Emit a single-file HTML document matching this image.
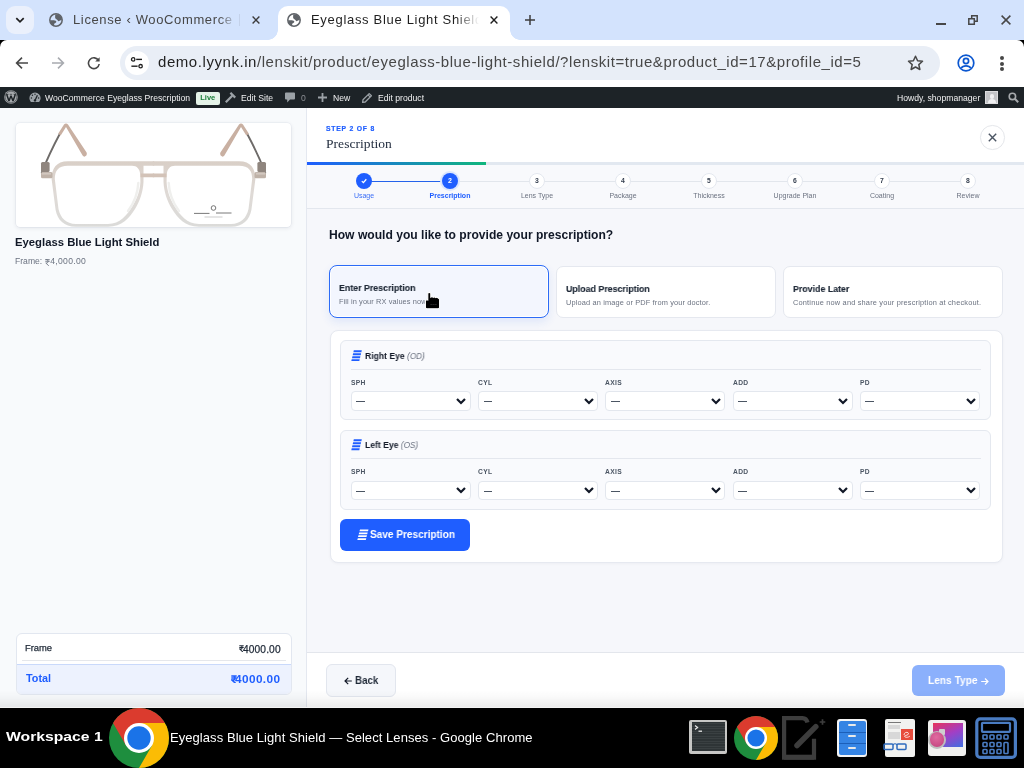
<!DOCTYPE html>
<html><head><meta charset="utf-8">
<style>
*{box-sizing:border-box;margin:0;padding:0}
html,body{width:1024px;height:768px;overflow:hidden;background:#000}
body{position:relative;font-family:"Liberation Sans",sans-serif}
.a.nw,.tx{will-change:transform}
.a{position:absolute}
.nw{white-space:nowrap}
/* chrome */
#tabbar{left:0;top:0;width:1024px;height:40px;background:#d3e3fd}
#toolbar{left:0;top:40px;width:1024px;height:47px;background:#fff;border-radius:7px 7px 0 0}
#adminbar{left:0;top:87px;width:1024px;height:21px;background:#1d2327;color:#f0f0f1;font-size:8.6px}
#page{left:0;top:108px;width:1024px;height:600px;background:#f5f7fa;overflow:hidden}
#taskbar{left:0;top:708px;width:1024px;height:60px;background:#000}
</style></head><body>

<!-- TAB BAR -->
<div id="tabbar" class="a">
  <div class="a" style="left:6px;top:6px;width:28px;height:28px;border-radius:9px;background:#eaf0fc"></div>
  <svg class="a" style="left:14px;top:14px" width="12" height="12" viewBox="0 0 12 12"><path d="M2.3 4.2 L6 7.9 L9.7 4.2" fill="none" stroke="#1f1f1f" stroke-width="1.7"/></svg>
  <!-- tab1 -->
  <svg class="a" style="left:49px;top:13px" width="14" height="14" viewBox="0 0 14 14"><circle cx="7" cy="7" r="6.2" fill="none" stroke="#5f6368" stroke-width="1.5"/><path d="M6.3 1.2 A5.9 5.9 0 0 1 12.9 7.2 L11.6 7.3 C10.8 7.4 10.4 8.2 9.6 8.2 C8.8 8.2 8.5 6.7 7.4 6.3 C6.4 5.9 6 5 6.1 3.8 Z" fill="#5f6368"/><path d="M1.1 7.3 L4.8 7.3 C6.2 7.3 7.6 8.1 7.3 9.1 C7 10 5.8 10 5.3 10.8 L4.9 12.7 A5.9 5.9 0 0 1 1.1 7.3 Z" fill="#5f6368"/></svg>
  <div class="a nw" style="left:72.5px;top:12px;width:165px;overflow:hidden;font-size:13px;color:#474747;letter-spacing:0.63px;-webkit-mask-image:linear-gradient(90deg,#000 88%,transparent 100%)">License ‹ WooCommerce Eyeglass</div>
  <div class="a" style="left:238.5px;top:14px;width:1px;height:12px;background:#c4d2ea"></div>
  <svg class="a" style="left:252px;top:16px" width="8" height="8" viewBox="0 0 8 8"><path d="M0.6 0.6 L7.4 7.4 M7.4 0.6 L0.6 7.4" stroke="#3c3c3c" stroke-width="1.4"/></svg>
  <!-- active tab -->
  <div class="a" style="left:278px;top:6px;width:232px;height:40px;background:#fff;border-radius:10px 10px 0 0"></div>
  <div class="a" style="left:268px;top:30px;width:10px;height:10px;background:radial-gradient(circle at 0 0,transparent 9.5px,#fff 10px)"></div>
  <div class="a" style="left:510px;top:30px;width:10px;height:10px;background:radial-gradient(circle at 100% 0,transparent 9.5px,#fff 10px)"></div>
  <svg class="a" style="left:287px;top:13px" width="14" height="14" viewBox="0 0 14 14"><circle cx="7" cy="7" r="6.2" fill="none" stroke="#5f6368" stroke-width="1.5"/><path d="M6.3 1.2 A5.9 5.9 0 0 1 12.9 7.2 L11.6 7.3 C10.8 7.4 10.4 8.2 9.6 8.2 C8.8 8.2 8.5 6.7 7.4 6.3 C6.4 5.9 6 5 6.1 3.8 Z" fill="#5f6368"/><path d="M1.1 7.3 L4.8 7.3 C6.2 7.3 7.6 8.1 7.3 9.1 C7 10 5.8 10 5.3 10.8 L4.9 12.7 A5.9 5.9 0 0 1 1.1 7.3 Z" fill="#5f6368"/></svg>
  <div class="a nw" style="left:311px;top:12px;width:168px;overflow:hidden;font-size:13px;color:#1f1f1f;letter-spacing:0.69px;-webkit-mask-image:linear-gradient(90deg,#000 86%,transparent 100%)">Eyeglass Blue Light Shield — Select</div>
  <svg class="a" style="left:490px;top:16px" width="8" height="8" viewBox="0 0 8 8"><path d="M0.6 0.6 L7.4 7.4 M7.4 0.6 L0.6 7.4" stroke="#1f1f1f" stroke-width="1.4"/></svg>
  <svg class="a" style="left:525px;top:15px" width="10" height="10" viewBox="0 0 10 10"><path d="M5 0 V10 M0 5 H10" stroke="#3c3c3c" stroke-width="1.5"/></svg>
  <!-- window controls -->
  <div class="a" style="left:936px;top:22.5px;width:10px;height:2px;background:#474747"></div>
  <svg class="a" style="left:968px;top:15px" width="10" height="10" viewBox="0 0 10 10"><path d="M3.7 3.7 V0.8 H9.2 V6.3 H6.3" fill="none" stroke="#474747" stroke-width="1.5"/><path d="M0.8 3.7 H6.3 V9.2 H0.8Z" fill="none" stroke="#474747" stroke-width="1.5"/></svg>
  <svg class="a" style="left:1001px;top:15px" width="10" height="10" viewBox="0 0 10 10"><path d="M0.6 0.6 L9.4 9.4 M9.4 0.6 L0.6 9.4" stroke="#474747" stroke-width="1.5"/></svg>
</div>

<!-- TOOLBAR -->
<div id="toolbar" class="a">
  <svg class="a" style="left:15px;top:16px" width="14" height="14" viewBox="0 0 14 14"><path d="M13 7 H2 M7 1.6 L1.6 7 L7 12.4" fill="none" stroke="#474747" stroke-width="1.6"/></svg>
  <svg class="a" style="left:51px;top:16px" width="14" height="14" viewBox="0 0 14 14"><path d="M1 7 H12 M7 1.6 L12.4 7 L7 12.4" fill="none" stroke="#a8abb0" stroke-width="1.6"/></svg>
  <svg class="a" style="left:87px;top:16px" width="14" height="14" viewBox="0 0 14 14"><path d="M11.6 4.6 A5.4 5.4 0 1 0 12.2 8" fill="none" stroke="#474747" stroke-width="1.6"/><path d="M12.6 1.2 V5.6 H8.2Z" fill="#474747"/></svg>
  <div class="a" style="left:120px;top:6px;width:820px;height:34px;border-radius:17px;background:#e9eef6"></div>
  <div class="a" style="left:125px;top:11px;width:24px;height:24px;border-radius:12px;background:#fff"></div>
  <svg class="a" style="left:130px;top:16px" width="14" height="14" viewBox="0 0 14 14"><circle cx="3.2" cy="3.4" r="1.7" fill="none" stroke="#1f1f1f" stroke-width="1.3"/><path d="M6.2 3.4 H12" stroke="#1f1f1f" stroke-width="1.4"/><circle cx="10.6" cy="10.2" r="1.7" fill="none" stroke="#1f1f1f" stroke-width="1.3"/><path d="M1.4 10.2 H7.6" stroke="#1f1f1f" stroke-width="1.4"/></svg>
  <div class="a nw" style="left:158px;top:13px;font-size:15px;letter-spacing:0.56px;color:#474747"><span style="color:#1f1f1f">demo.lyynk.in</span>/lenskit/product/eyeglass-blue-light-shield/?lenskit=true&amp;product_id=17&amp;profile_id=5</div>
  <svg class="a" style="left:907px;top:15px" width="17" height="16" viewBox="0 0 17 16"><path d="M8.5 1.3 L10.6 5.8 L15.5 6.3 L11.8 9.6 L12.9 14.5 L8.5 12 L4.1 14.5 L5.2 9.6 L1.5 6.3 L6.4 5.8Z" fill="none" stroke="#474747" stroke-width="1.5" stroke-linejoin="round"/></svg>
  <svg class="a" style="left:957px;top:14px" width="18" height="18" viewBox="0 0 18 18"><circle cx="9" cy="9" r="7.8" fill="none" stroke="#0b57d0" stroke-width="1.7"/><circle cx="9" cy="7" r="2.6" fill="none" stroke="#0b57d0" stroke-width="1.7"/><path d="M4.2 14.2 C6 11 12 11 13.8 14.2" fill="none" stroke="#0b57d0" stroke-width="1.7"/></svg>
  <div class="a" style="left:1000px;top:16px;width:4px;height:4px;border-radius:2px;background:#474747"></div>
  <div class="a" style="left:1000px;top:21.5px;width:4px;height:4px;border-radius:2px;background:#474747"></div>
  <div class="a" style="left:1000px;top:27px;width:4px;height:4px;border-radius:2px;background:#474747"></div>
</div>

<!-- ADMIN BAR -->
<div id="adminbar" class="a">
  <svg class="a" style="left:4.2px;top:3.3px" width="14" height="14" viewBox="0 0 20 20"><circle cx="10" cy="10" r="9.7" fill="#a7aaad"/><circle cx="10" cy="10" r="8.4" fill="none" stroke="#1d2327" stroke-width="0.7"/><path d="M3.8 6.2 L7.1 15.6 L10 8.2 L12.9 15.6 L16.2 6.2" fill="none" stroke="#1d2327" stroke-width="2.1" stroke-linejoin="bevel"/><path d="M2.6 6.2 H6.4 M8.2 6.2 H11.6 M13.6 6.2 H17" stroke="#1d2327" stroke-width="0.9"/></svg>
  <svg class="a" style="left:29px;top:4.5px" width="12" height="11" viewBox="0 0 12 11"><path d="M6 0.5 A5.6 5.6 0 0 0 0.4 6.1 C0.4 7.6 1 8.9 1.9 9.9 H10.1 C11 8.9 11.6 7.6 11.6 6.1 A5.6 5.6 0 0 0 6 0.5Z" fill="#9ca2a7"/><path d="M6 8.6 L8.4 3.2" stroke="#1d2327" stroke-width="1.3"/><circle cx="6" cy="8.4" r="1.2" fill="#1d2327"/><circle cx="2.4" cy="6" r="0.7" fill="#1d2327"/><circle cx="3.4" cy="3.2" r="0.7" fill="#1d2327"/><circle cx="6" cy="2.2" r="0.7" fill="#1d2327"/><circle cx="9.6" cy="6" r="0.7" fill="#1d2327"/></svg>
  <div class="a nw" style="left:45px;top:5.5px;font-size:8.65px;color:#f0f0f1">WooCommerce Eyeglass Prescription</div>
  <div class="a nw" style="left:196px;top:4.5px;width:23.5px;height:12.5px;background:#e5f3e8;border-radius:2px;color:#1a7f37;font-size:7.5px;font-weight:bold;text-align:center;line-height:12px">Live</div>
  <svg class="a" style="left:224px;top:4px" width="13" height="13" viewBox="0 0 13 13"><path d="M7.2 1 L12 5.8 L10.4 7.4 L8.8 5.8 L2.6 12 L1 10.4 L7.2 4.2 L5.6 2.6Z" fill="#9ca2a7"/></svg>
  <div class="a nw" style="left:241px;top:5.5px;font-size:8.65px;color:#f0f0f1">Edit Site</div>
  <svg class="a" style="left:285px;top:5px" width="10" height="11" viewBox="0 0 10 11"><path d="M1 0.5 H9 A1 1 0 0 1 10 1.5 V6.5 A1 1 0 0 1 9 7.5 H5 L2.2 10.5 V7.5 H1 A1 1 0 0 1 0 6.5 V1.5 A1 1 0 0 1 1 0.5Z" fill="#9ca2a7"/></svg>
  <div class="a nw" style="left:300.5px;top:5.5px;font-size:8.65px;color:#8c8f94">0</div>
  <svg class="a" style="left:317.5px;top:6px" width="9" height="9" viewBox="0 0 9 9"><path d="M4.5 0 V9 M0 4.5 H9" stroke="#9ca2a7" stroke-width="1.8"/></svg>
  <div class="a nw" style="left:332.5px;top:5.5px;font-size:8.65px;color:#f0f0f1">New</div>
  <svg class="a" style="left:362px;top:5.5px" width="10" height="10" viewBox="0 0 10 10"><path d="M7.2 0.6 L9.4 2.8 L3.2 9 L0.6 9.4 L1 6.8Z" fill="none" stroke="#9ca2a7" stroke-width="1.3" stroke-linejoin="round"/><path d="M6 1.8 L8.2 4" stroke="#9ca2a7" stroke-width="1.1"/></svg>
  <div class="a nw" style="left:377.5px;top:5.5px;font-size:8.65px;color:#f0f0f1">Edit product</div>
  <div class="a nw" style="left:897px;top:5.5px;font-size:8.65px;color:#f0f0f1">Howdy, shopmanager</div>
  <div class="a" style="left:985px;top:3.5px;width:13px;height:13px;background:#c3c4c7;border:1px solid #dcdcde"><div class="a" style="left:3.5px;top:2px;width:4.5px;height:5px;border-radius:3px;background:#f0f0f1"></div><div class="a" style="left:1.5px;top:7px;width:8px;height:4px;border-radius:4px 4px 0 0;background:#f0f0f1"></div></div>
  <svg class="a" style="left:1008px;top:4.5px" width="11" height="11" viewBox="0 0 11 11"><circle cx="4.4" cy="4.4" r="3.2" fill="none" stroke="#a7aaad" stroke-width="1.6"/><path d="M6.8 6.8 L10.2 10.2" stroke="#a7aaad" stroke-width="2"/></svg>
</div>

<!-- PAGE -->
<div id="page" class="a">
  <!-- LEFT PANEL -->
  <div class="a" style="left:0;top:0;width:306px;height:600px;background:#f8fafc"></div>
  <div class="a" style="left:306px;top:0;width:1px;height:600px;background:#e4e8f0"></div>
  <div class="a" style="left:16px;top:14.5px;width:275px;height:104px;background:#fff;border-radius:4px;box-shadow:0 1px 4px rgba(30,40,70,.10),0 0 0 0.5px #e8ecf2;overflow:hidden"><svg class="a" style="left:0;top:0" width="275" height="104" viewBox="0 0 275 104">
  <defs>
    <linearGradient id="fr" x1="0" y1="38" x2="0" y2="104" gradientUnits="userSpaceOnUse"><stop offset="0" stop-color="#d9cfc7"/><stop offset="0.5" stop-color="#dfdad6"/><stop offset="1" stop-color="#dbdbd9"/></linearGradient>
    <g id="halfg">
      <path d="M44 10.5 Q33 31 25.6 50" fill="none" stroke="#6e6b69" stroke-width="1.9"/>
      <path d="M42.1 10.8 L48 1.4 Q50 -0.6 52 1.4 L70.6 29.6 Q71.6 32.8 68.8 33.6 Q67.4 33.8 66.6 32.5 L50 4 L44.7 12.4 Z" fill="#c9b0a2"/>
      
      <path fill="url(#fr)" fill-rule="evenodd" d="M52 38.3 L138.2 38.3 L138.2 42.7 L127.5 42.7 L127.5 59 C127 69 124 78 119 86 C113.5 95 106 103.7 92 103.7 L60 103.7 C48 103.7 41.5 97 39.6 87 L35.6 56 C35.6 46 40 38.3 52 38.3 Z
        M52 42.7 L116 42.7 C121 42.7 124 46 124.3 52 L124.4 59 C124 68 121 76 116 84 C111 92 104 100.9 92 100.9 L60 100.9 C50 100.9 44.5 95 42.5 86 L38.8 56 C38.8 48 42 42.7 52 42.7 Z"/>
      <path d="M124.5 50.4 H138.2 V54.2 H124.5Z" fill="#d3c3b8"/>
      <path d="M122.3 60 C121.8 70 118 80 112 88" fill="none" stroke="#efefed" stroke-width="2.4" stroke-linecap="round"/>
      <rect x="25" y="39" width="8.6" height="10" rx="1.5" fill="#8f857e"/>
      <rect x="25" y="49" width="11.5" height="6.3" rx="1.5" fill="#bfb2a8"/>
      <rect x="26" y="49.8" width="9" height="1.8" fill="#d2c8c0"/>
    </g>
  </defs>
  <use href="#halfg"/>
  <use href="#halfg" transform="translate(275 0) scale(-1 1)"/>
  <circle cx="197.5" cy="85" r="2.3" fill="none" stroke="#555" stroke-width="0.8"/>
  <path d="M178 90.4 H193.5 M200 90 H215.5" stroke="#6a6a6a" stroke-width="0.9"/>
  <path d="M188.5 94 H206.5" stroke="#aaa" stroke-width="0.6"/>
</svg></div>
  <div class="a nw" style="left:15px;top:127.7px;font-size:11.3px;font-weight:bold;color:#111827">Eyeglass Blue Light Shield</div>
  <div class="a nw" style="left:15px;top:148.3px;font-size:8.6px;color:#6b7280">Frame: <span style="display:inline-block;width:5.6px"></span><span style="letter-spacing:0.3px">4,000.00</span></div><svg class="a" style="left:45.3px;top:150.6px" width="5" height="7" viewBox="0 0 5 7"><path d="M0.3 0.6 H4.7 M0.3 2.3 H4.7 M0.6 0.6 H1.8 C3.6 0.6 3.6 4 1.8 4 H0.8 L3.8 6.8" fill="none" stroke="#6b7280" stroke-width="0.85"/></svg>
  <!-- summary -->
  <div class="a" style="left:15.5px;top:525px;width:276px;height:61.7px;border-radius:6px;background:#fff;border:1px solid #e2e7f0;overflow:hidden">
    <div class="a nw" style="left:8.5px;top:7.8px;font-size:9.4px;color:#1f2937;-webkit-text-stroke:0.25px #1f2937">Frame</div>
    <div class="a nw" style="right:9.6px;top:10.2px;font-size:10.2px;letter-spacing:0.12px;color:#1f2937;-webkit-text-stroke:0.25px #1f2937">4000.00</div>
    <svg class="a" style="left:222.8px;top:10.8px" width="5" height="7" viewBox="0 0 5 7"><path d="M0.3 0.7 H4.7 M0.3 2.4 H4.7 M0.6 0.7 H1.8 C3.6 0.7 3.6 4.1 1.8 4.1 H0.8 L3.8 6.9" fill="none" stroke="#1f2937" stroke-width="1.05"/></svg>
    <div class="a" style="left:5px;top:25.5px;width:264px;height:1px;background:#e5e7eb"></div>
    <div class="a" style="left:0;top:29.5px;width:276px;height:32px;background:#edf2fe;border-top:1px solid #c9d9fb"></div>
    <div class="a nw" style="left:9px;top:38.3px;font-size:10.8px;font-weight:bold;color:#1f5eff">Total</div>
    <div class="a nw" style="right:9.6px;top:37.9px;font-size:11.8px;letter-spacing:0.4px;font-weight:bold;color:#1f5eff">4000.00</div>
    <svg class="a" style="left:214.5px;top:40.5px" width="6" height="8.5" viewBox="0 0 6 8.5"><path d="M0.3 0.9 H5.7 M0.3 2.9 H5.7 M0.7 0.9 H2.2 C4.4 0.9 4.4 5 2.2 5 H0.9 L4.6 8.4" fill="none" stroke="#1f5eff" stroke-width="1.5"/></svg>
  </div>
  <!-- frame price rupee fix -->

  <!-- RIGHT PANEL -->
  <div class="a" style="left:307px;top:0;width:717px;height:54px;background:#fff"></div>
  <div class="a nw" style="left:326px;top:16.5px;font-size:6.8px;font-weight:bold;color:#1f5eff;letter-spacing:0.8px;-webkit-text-stroke:0.2px #1f5eff">STEP 2 OF 8</div>
  <div class="a nw" style="left:326.3px;top:28px;font-family:'Liberation Serif',serif;font-size:13.5px;letter-spacing:0.05px;color:#1e293b">Prescription</div>
  <div class="a" style="left:980px;top:17px;width:24.5px;height:24.5px;border-radius:50%;border:1px solid #e5e7eb;background:#fff"></div>
  <svg class="a" style="left:988px;top:25px" width="9" height="9" viewBox="0 0 9 9"><path d="M0.8 0.8 L8.2 8.2 M8.2 0.8 L0.8 8.2" stroke="#4b5563" stroke-width="1.4"/></svg>
  <!-- progress -->
  <div class="a" style="left:307px;top:54px;width:717px;height:3px;background:#e2e8f0"></div>
  <div class="a" style="left:307px;top:54px;width:179px;height:3px;background:linear-gradient(90deg,#1f5eff,#10b67c)"></div>
  <!-- stepper -->
  <div class="a" style="left:307px;top:57px;width:717px;height:44px;background:#f8f9fc;border-bottom:1px solid #e3e7ee"></div>
  <div class="a" style="left:364px;top:72.5px;width:86px;height:1.2px;background:#2563eb"></div>
  <div class="a" style="left:450px;top:72.5px;width:518px;height:1px;background:#e2e6ec"></div>
  <div class="a" style="left:356px;top:64.8px;width:16px;height:16px;border-radius:50%;background:#1f5eff"></div><svg class="a" style="left:361px;top:70px" width="6" height="6" viewBox="0 0 6 6"><path d="M0.8 3.1 L2.4 4.6 L5.3 1.3" fill="none" stroke="#fff" stroke-width="1.3"/></svg><div class="a nw" style="left:314px;width:100px;top:83.5px;text-align:center;font-size:7px;font-weight:normal;color:#3b6ef6">Usage</div><div class="a" style="left:440px;top:62.8px;width:20px;height:20px;border-radius:50%;background:#dbe6fe"></div><div class="a" style="left:442px;top:64.8px;width:16px;height:16px;border-radius:50%;background:#1f5eff;color:#fff;will-change:transform;font-size:7px;font-weight:bold;text-align:center;line-height:16px">2</div><div class="a nw" style="left:400px;width:100px;top:83.5px;text-align:center;font-size:7px;font-weight:bold;color:#1f5eff">Prescription</div><div class="a" style="left:528.54px;top:64.8px;width:16px;height:16px;border-radius:50%;background:#fff;border:1px solid #e3e7ee;color:#374151;will-change:transform;font-size:6.8px;font-weight:bold;text-align:center;line-height:14px">3</div><div class="a nw" style="left:486.54px;width:100px;top:83.5px;text-align:center;font-size:7px;font-weight:normal;color:#6b7280">Lens Type</div><div class="a" style="left:614.81px;top:64.8px;width:16px;height:16px;border-radius:50%;background:#fff;border:1px solid #e3e7ee;color:#374151;will-change:transform;font-size:6.8px;font-weight:bold;text-align:center;line-height:14px">4</div><div class="a nw" style="left:572.81px;width:100px;top:83.5px;text-align:center;font-size:7px;font-weight:normal;color:#6b7280">Package</div><div class="a" style="left:701.08px;top:64.8px;width:16px;height:16px;border-radius:50%;background:#fff;border:1px solid #e3e7ee;color:#374151;will-change:transform;font-size:6.8px;font-weight:bold;text-align:center;line-height:14px">5</div><div class="a nw" style="left:659.08px;width:100px;top:83.5px;text-align:center;font-size:7px;font-weight:normal;color:#6b7280">Thickness</div><div class="a" style="left:787.35px;top:64.8px;width:16px;height:16px;border-radius:50%;background:#fff;border:1px solid #e3e7ee;color:#374151;will-change:transform;font-size:6.8px;font-weight:bold;text-align:center;line-height:14px">6</div><div class="a nw" style="left:745.35px;width:100px;top:83.5px;text-align:center;font-size:7px;font-weight:normal;color:#6b7280">Upgrade Plan</div><div class="a" style="left:873.62px;top:64.8px;width:16px;height:16px;border-radius:50%;background:#fff;border:1px solid #e3e7ee;color:#374151;will-change:transform;font-size:6.8px;font-weight:bold;text-align:center;line-height:14px">7</div><div class="a nw" style="left:831.62px;width:100px;top:83.5px;text-align:center;font-size:7px;font-weight:normal;color:#6b7280">Coating</div><div class="a" style="left:959.89px;top:64.8px;width:16px;height:16px;border-radius:50%;background:#fff;border:1px solid #e3e7ee;color:#374151;will-change:transform;font-size:6.8px;font-weight:bold;text-align:center;line-height:14px">8</div><div class="a nw" style="left:917.89px;width:100px;top:83.5px;text-align:center;font-size:7px;font-weight:normal;color:#6b7280">Review</div>
  <!-- content -->
  <div class="a" style="left:307px;top:101px;width:717px;height:443px;background:#f6f7fb"></div>
  <div class="a nw" style="left:329px;top:119.5px;font-size:12.1px;font-weight:bold;color:#111827">How would you like to provide your prescription?</div>
  <div class="a" style="left:329px;top:157px;width:220px;height:52.7px;background:#f3f6fe;border:1.5px solid #2c6bf7;border-radius:8px;box-shadow:inset 0 0 0 1px #fff,0 4px 10px rgba(37,99,235,.11)"></div>
  <div class="a nw" style="left:339px;top:173.5px;font-size:9.8px;font-weight:bold;color:#1f2937;-webkit-text-stroke:0.15px #1f2937;transform-origin:0 0;transform:scaleX(0.9)">Enter Prescription</div>
  <div class="a nw" style="left:339px;top:189px;font-size:7.4px;letter-spacing:0.1px;color:#6b7280">Fill in your RX values now</div>
  <div class="a" style="left:555.7px;top:158.2px;width:220px;height:52px;background:#fff;border:1px solid #e5e8ef;border-radius:7px"></div>
  <div class="a nw" style="left:565.7px;top:174.5px;font-size:9.8px;font-weight:bold;color:#1f2937;-webkit-text-stroke:0.15px #1f2937;transform-origin:0 0;transform:scaleX(0.9)">Upload Prescription</div>
  <div class="a nw" style="left:565.7px;top:190px;font-size:7.4px;letter-spacing:0.14px;color:#6b7280">Upload an image or PDF from your doctor.</div>
  <div class="a" style="left:782.8px;top:158.2px;width:220px;height:52px;background:#fff;border:1px solid #e5e8ef;border-radius:7px"></div>
  <div class="a nw" style="left:793px;top:174.5px;font-size:9.8px;font-weight:bold;color:#1f2937;-webkit-text-stroke:0.15px #1f2937;transform-origin:0 0;transform:scaleX(0.9)">Provide Later</div>
  <div class="a nw" style="left:793px;top:190px;font-size:7.4px;letter-spacing:0.18px;color:#6b7280">Continue now and share your prescription at checkout.</div>
  <!-- main panel -->
  <div class="a" style="left:329.5px;top:221.5px;width:673px;height:233px;background:#fff;border:1px solid #e6e9f0;border-radius:8px;box-shadow:0 1px 3px rgba(20,30,60,.04)"></div>
  <div class="a" style="left:339.8px;top:232px;width:651px;height:79.6px;background:#f9fafd;border:1px solid #e4e8ef;border-radius:6px"></div><svg class="a" style="left:350.8px;top:241.8px" width="11" height="11.4" viewBox="0 0 11 11.4"><path d="M2.8 0.2 H10.8 L10.4 2.2 H2.4Z M2.1 3.2 H10.1 L9.7 5.2 H1.7Z M1.4 6.2 H9.4 L9 8.2 H1Z M0.7 9.2 H8.7 L8.3 11.2 H0.3Z" fill="#1f5eff"/></svg><div class="a nw" style="left:365px;top:242.5px;font-size:9px;font-weight:bold;color:#111827;transform-origin:0 0;transform:scaleX(0.955)">Right Eye <span style="font-weight:normal;font-style:italic;color:#6b7280;font-size:8.6px">(OD)</span></div><div class="a" style="left:351px;top:260.7px;width:630px;height:1px;background:#e4e7ee"></div><div class="a nw" style="left:350.6px;top:270.5px;font-size:6.7px;font-weight:bold;color:#4b5563;letter-spacing:0.35px">SPH</div><div class="a" style="left:350.8px;top:283px;width:120px;height:19.7px;background:#fff;border:1px solid #e3e7ee;border-radius:4px"></div><div class="a" style="left:356.2px;top:293px;width:8.8px;height:1px;background:#4b5563"></div><svg class="a" style="left:456.3px;top:289.5px" width="10" height="7" viewBox="0 0 10 7"><path d="M1 1 L5 5 L9 1" fill="none" stroke="#111827" stroke-width="2.2"/></svg><div class="a nw" style="left:477.9px;top:270.5px;font-size:6.7px;font-weight:bold;color:#4b5563;letter-spacing:0.35px">CYL</div><div class="a" style="left:478.1px;top:283px;width:120px;height:19.7px;background:#fff;border:1px solid #e3e7ee;border-radius:4px"></div><div class="a" style="left:483.5px;top:293px;width:8.8px;height:1px;background:#4b5563"></div><svg class="a" style="left:583.6px;top:289.5px" width="10" height="7" viewBox="0 0 10 7"><path d="M1 1 L5 5 L9 1" fill="none" stroke="#111827" stroke-width="2.2"/></svg><div class="a nw" style="left:605.2px;top:270.5px;font-size:6.7px;font-weight:bold;color:#4b5563;letter-spacing:0.35px">AXIS</div><div class="a" style="left:605.4px;top:283px;width:120px;height:19.7px;background:#fff;border:1px solid #e3e7ee;border-radius:4px"></div><div class="a" style="left:610.8px;top:293px;width:8.8px;height:1px;background:#4b5563"></div><svg class="a" style="left:710.9px;top:289.5px" width="10" height="7" viewBox="0 0 10 7"><path d="M1 1 L5 5 L9 1" fill="none" stroke="#111827" stroke-width="2.2"/></svg><div class="a nw" style="left:732.5px;top:270.5px;font-size:6.7px;font-weight:bold;color:#4b5563;letter-spacing:0.35px">ADD</div><div class="a" style="left:732.7px;top:283px;width:120px;height:19.7px;background:#fff;border:1px solid #e3e7ee;border-radius:4px"></div><div class="a" style="left:738.1px;top:293px;width:8.8px;height:1px;background:#4b5563"></div><svg class="a" style="left:838.2px;top:289.5px" width="10" height="7" viewBox="0 0 10 7"><path d="M1 1 L5 5 L9 1" fill="none" stroke="#111827" stroke-width="2.2"/></svg><div class="a nw" style="left:859.8px;top:270.5px;font-size:6.7px;font-weight:bold;color:#4b5563;letter-spacing:0.35px">PD</div><div class="a" style="left:860.0px;top:283px;width:120px;height:19.7px;background:#fff;border:1px solid #e3e7ee;border-radius:4px"></div><div class="a" style="left:865.4px;top:293px;width:8.8px;height:1px;background:#4b5563"></div><svg class="a" style="left:965.5px;top:289.5px" width="10" height="7" viewBox="0 0 10 7"><path d="M1 1 L5 5 L9 1" fill="none" stroke="#111827" stroke-width="2.2"/></svg>
  <div class="a" style="left:339.8px;top:321.5px;width:651px;height:80.3px;background:#f9fafd;border:1px solid #e4e8ef;border-radius:6px"></div><svg class="a" style="left:350.8px;top:331.3px" width="11" height="11.4" viewBox="0 0 11 11.4"><path d="M2.8 0.2 H10.8 L10.4 2.2 H2.4Z M2.1 3.2 H10.1 L9.7 5.2 H1.7Z M1.4 6.2 H9.4 L9 8.2 H1Z M0.7 9.2 H8.7 L8.3 11.2 H0.3Z" fill="#1f5eff"/></svg><div class="a nw" style="left:365px;top:332.0px;font-size:9px;font-weight:bold;color:#111827;transform-origin:0 0;transform:scaleX(0.955)">Left Eye <span style="font-weight:normal;font-style:italic;color:#6b7280;font-size:8.6px">(OS)</span></div><div class="a" style="left:351px;top:350.2px;width:630px;height:1px;background:#e4e7ee"></div><div class="a nw" style="left:350.6px;top:360.0px;font-size:6.7px;font-weight:bold;color:#4b5563;letter-spacing:0.35px">SPH</div><div class="a" style="left:350.8px;top:372.5px;width:120px;height:19.7px;background:#fff;border:1px solid #e3e7ee;border-radius:4px"></div><div class="a" style="left:356.2px;top:382.5px;width:8.8px;height:1px;background:#4b5563"></div><svg class="a" style="left:456.3px;top:379.0px" width="10" height="7" viewBox="0 0 10 7"><path d="M1 1 L5 5 L9 1" fill="none" stroke="#111827" stroke-width="2.2"/></svg><div class="a nw" style="left:477.9px;top:360.0px;font-size:6.7px;font-weight:bold;color:#4b5563;letter-spacing:0.35px">CYL</div><div class="a" style="left:478.1px;top:372.5px;width:120px;height:19.7px;background:#fff;border:1px solid #e3e7ee;border-radius:4px"></div><div class="a" style="left:483.5px;top:382.5px;width:8.8px;height:1px;background:#4b5563"></div><svg class="a" style="left:583.6px;top:379.0px" width="10" height="7" viewBox="0 0 10 7"><path d="M1 1 L5 5 L9 1" fill="none" stroke="#111827" stroke-width="2.2"/></svg><div class="a nw" style="left:605.2px;top:360.0px;font-size:6.7px;font-weight:bold;color:#4b5563;letter-spacing:0.35px">AXIS</div><div class="a" style="left:605.4px;top:372.5px;width:120px;height:19.7px;background:#fff;border:1px solid #e3e7ee;border-radius:4px"></div><div class="a" style="left:610.8px;top:382.5px;width:8.8px;height:1px;background:#4b5563"></div><svg class="a" style="left:710.9px;top:379.0px" width="10" height="7" viewBox="0 0 10 7"><path d="M1 1 L5 5 L9 1" fill="none" stroke="#111827" stroke-width="2.2"/></svg><div class="a nw" style="left:732.5px;top:360.0px;font-size:6.7px;font-weight:bold;color:#4b5563;letter-spacing:0.35px">ADD</div><div class="a" style="left:732.7px;top:372.5px;width:120px;height:19.7px;background:#fff;border:1px solid #e3e7ee;border-radius:4px"></div><div class="a" style="left:738.1px;top:382.5px;width:8.8px;height:1px;background:#4b5563"></div><svg class="a" style="left:838.2px;top:379.0px" width="10" height="7" viewBox="0 0 10 7"><path d="M1 1 L5 5 L9 1" fill="none" stroke="#111827" stroke-width="2.2"/></svg><div class="a nw" style="left:859.8px;top:360.0px;font-size:6.7px;font-weight:bold;color:#4b5563;letter-spacing:0.35px">PD</div><div class="a" style="left:860.0px;top:372.5px;width:120px;height:19.7px;background:#fff;border:1px solid #e3e7ee;border-radius:4px"></div><div class="a" style="left:865.4px;top:382.5px;width:8.8px;height:1px;background:#4b5563"></div><svg class="a" style="left:965.5px;top:379.0px" width="10" height="7" viewBox="0 0 10 7"><path d="M1 1 L5 5 L9 1" fill="none" stroke="#111827" stroke-width="2.2"/></svg>
  <div class="a" style="left:340px;top:411.3px;width:129.6px;height:31.4px;background:#1f5eff;border-radius:6px"></div>
  <svg class="a" style="left:356.5px;top:421px" width="12" height="12" viewBox="0 0 12 12"><path d="M3 0.5 H11.5 L11 2.3 H2.5Z M2.2 3.4 H10.7 L10.2 5.2 H1.7Z M1.5 6.3 H10 L9.5 8.1 H1Z M0.8 9.2 H9.3 L8.8 11 H0.3Z" fill="#fff"/></svg>
  <div class="a nw" style="left:369.5px;top:420px;font-size:10.6px;font-weight:bold;color:#fff;transform-origin:0 0;transform:scaleX(0.95)">Save Prescription</div>
  <!-- footer -->
  <div class="a" style="left:307px;top:544px;width:717px;height:56px;background:#fff;border-top:1px solid #e3e6ec"></div>
  <div class="a" style="left:326.3px;top:556.2px;width:69.4px;height:32.4px;background:#f5f7fb;border:1px solid #e2e6ee;border-radius:6px"></div>
  <svg class="a" style="left:343.5px;top:568.5px" width="8" height="8" viewBox="0 0 8 8"><path d="M7.8 4 H1 M4.2 0.8 L1 4 L4.2 7.2" fill="none" stroke="#111827" stroke-width="1.2"/></svg>
  <div class="a nw" style="left:355px;top:566px;font-size:10.6px;font-weight:bold;color:#1f2937;transform-origin:0 0;transform:scaleX(0.92)">Back</div>
  <div class="a" style="left:912px;top:557px;width:93px;height:31px;background:#8bb0fc;border-radius:6px"></div>
  <div class="a nw" style="left:927.5px;top:566px;font-size:10.6px;font-weight:bold;color:#fff;transform-origin:0 0;transform:scaleX(0.96)">Lens Type</div><svg class="a" style="left:980.5px;top:569.5px" width="8" height="7" viewBox="0 0 8 7"><path d="M0.2 3.5 H7 M4 0.5 L7 3.5 L4 6.5" fill="none" stroke="#fff" stroke-width="1.2"/></svg>
<div class="a" style="left:0;top:582px;width:1024px;height:17px;background:linear-gradient(180deg,rgba(0,0,0,0) 0,rgba(0,0,0,0.02) 40%,rgba(0,0,0,0.075) 100%)"></div>
  <div class="a" style="left:0;top:599px;width:1024px;height:1px;background:#f4f4f4"></div>
</div>

<!-- TASKBAR -->
<div id="taskbar" class="a"><div class="a nw" style="left:6px;top:21.5px;font-size:12.2px;font-weight:bold;color:#fff;transform-origin:0 0;transform:scaleX(1.29)">Workspace 1</div><svg class="a" style="left:109px;top:0px" width="60" height="60" viewBox="109 0 60 60"><clipPath id="cl1"><circle cx="139" cy="30" r="30"/></clipPath><g clip-path="url(#cl1)"><rect x="109" y="0" width="60" height="60" fill="#1e8e3e"/><path d="M49.00 -60.00 L229.00 -60.00 L229.00 15.00 L139.00 15.00 L139.00 30.00 L126.01 37.50 L81.01 -40.44 Z" fill="#db3b2e"/><path d="M229.00 15.00 L139.00 15.00 L139.00 30.00 L151.99 37.50 L106.99 115.44 L229.00 120.00 Z" fill="#fbbc04"/></g><circle cx="139" cy="30" r="15.0" fill="#fff"/><circle cx="139" cy="30" r="11.70" fill="#1a73e8"/></svg><div class="a nw" style="left:169.5px;top:21.5px;font-size:13px;color:#fff;letter-spacing:0.06px">Eyeglass Blue Light Shield — Select Lenses - Google Chrome</div><div class="a" style="left:689px;top:11.7px;width:38px;height:34.3px;background:#c7c7c5;border-radius:2px"></div>
<div class="a" style="left:691.5px;top:14.2px;width:33px;height:29.3px;background:repeating-linear-gradient(180deg,#2e3436 0,#2e3436 1.5px,#3a4042 1.5px,#3a4042 2.5px)"></div>
<svg class="a" style="left:694px;top:16px" width="12" height="10" viewBox="0 0 12 10"><path d="M1 1.5 L3.6 3.5 L1 5.5" fill="none" stroke="#e8e8e8" stroke-width="1.2"/><path d="M4.5 7.2 H8" stroke="#e8e8e8" stroke-width="1.3"/></svg><svg class="a" style="left:734px;top:8px" width="44" height="44" viewBox="734 8 44 44"><clipPath id="cl2"><circle cx="756" cy="30" r="22"/></clipPath><g clip-path="url(#cl2)"><rect x="734" y="8" width="44" height="44" fill="#1e8e3e"/><path d="M690.00 -36.00 L822.00 -36.00 L822.00 19.00 L756.00 19.00 L756.00 30.00 L746.47 35.50 L713.47 -21.66 Z" fill="#db3b2e"/><path d="M822.00 19.00 L756.00 19.00 L756.00 30.00 L765.53 35.50 L732.53 92.66 L822.00 96.00 Z" fill="#fbbc04"/></g><circle cx="756" cy="30" r="11.0" fill="#fff"/><circle cx="756" cy="30" r="8.58" fill="#1a73e8"/></svg><svg class="a" style="left:782px;top:8px" width="45" height="45" viewBox="0 0 45 45"><path d="M25.5 6.5 Q24.5 2.1 20.5 2.1 H2.1 V41.6 H32 V22.7" fill="none" stroke="#3d3d3d" stroke-width="4.2"/><path d="M2.1 41.2 H32" stroke="#3d3d3d" stroke-width="5"/><path d="M15 29.5 L33.8 10.6" stroke="#3d3d3d" stroke-width="5.5" stroke-linecap="round"/><path d="M40.5 3.2 V8.8 M37.7 6 H43.3" stroke="#3d3d3d" stroke-width="1.7"/></svg><div class="a" style="left:837px;top:11px;width:30px;height:37.5px;background:#f5f5f5;border-radius:3px"></div>
<div class="a" style="left:838.5px;top:12.5px;width:27px;height:34.5px;background:#3584e4;border-radius:2px"></div>
<div class="a" style="left:838.5px;top:23.6px;width:27px;height:0.8px;background:#1c5fb8"></div>
<div class="a" style="left:838.5px;top:35px;width:27px;height:0.8px;background:#1c5fb8"></div>
<div class="a" style="left:848px;top:16px;width:8px;height:2.2px;background:#e9e9e9;border-radius:1px"></div>
<div class="a" style="left:848px;top:27px;width:8px;height:2.2px;background:#e9e9e9;border-radius:1px"></div>
<div class="a" style="left:848px;top:38.5px;width:8px;height:2.2px;background:#e9e9e9;border-radius:1px"></div><div class="a" style="left:885px;top:11px;width:30px;height:37.5px;background:#f2f2f0;border-radius:2px"></div>
<div class="a" style="left:887.5px;top:14px;width:13px;height:1px;background:#777"></div>
<div class="a" style="left:887.5px;top:17px;width:12px;height:4px;background:#d8d8d8"></div>
<div class="a" style="left:887.5px;top:24px;width:12px;height:7px;background:#d8d8d8"></div>
<div class="a" style="left:901px;top:20.5px;width:11.5px;height:11.5px;background:#e74c3c"></div>
<svg class="a" style="left:902.3px;top:22px" width="9" height="9" viewBox="0 0 9 9"><path d="M2 5 C2 2 6 1.5 6.5 3.5 C7 5 3 5.5 2.5 6 C3 8 6.5 7.5 8 6" fill="none" stroke="#fff" stroke-width="0.8"/></svg>
<svg class="a" style="left:883px;top:34px" width="24" height="9" viewBox="0 0 24 9"><rect x="1" y="2" width="9" height="5.5" rx="1" fill="none" stroke="#2f6bbd" stroke-width="1.5"/><rect x="14" y="2" width="9" height="5.5" rx="1" fill="none" stroke="#2f6bbd" stroke-width="1.5"/><path d="M10 3 Q12 0.5 14 3" fill="none" stroke="#2f6bbd" stroke-width="1.2"/></svg><div class="a" style="left:927.5px;top:12px;width:38.5px;height:36px;background:#f0f0ee;border-radius:3px"></div>
<div class="a" style="left:933px;top:14.5px;width:30px;height:24px;background:linear-gradient(155deg,#e8345a 0%,#a13fc6 50%,#3f6fe0 100%)"></div>
<div class="a" style="left:928px;top:22.5px;width:18px;height:18px;border-radius:50%;background:#bdbdbd"></div><div class="a" style="left:939px;top:21px;width:6px;height:6px;background:#cfcfcf;border-radius:1px"></div>
<div class="a" style="left:929.7px;top:24.2px;width:14.6px;height:14.6px;border-radius:50%;background:radial-gradient(circle at 45% 35%,#e06aa0,#c0407a)"></div><svg class="a" style="left:975px;top:9px" width="42" height="42" viewBox="0 0 42 42"><rect x="1.8" y="1.8" width="38.6" height="38.6" rx="3.5" fill="none" stroke="#4a7cc2" stroke-width="3.2"/><rect x="7" y="5.8" width="28" height="9" rx="0.8" fill="none" stroke="#4a7cc2" stroke-width="2.2"/>
<g fill="none" stroke="#4a7cc2" stroke-width="1.6"><rect x="8" y="18" width="4" height="4" rx="0.5"/><rect x="15" y="18" width="4" height="4" rx="0.8"/><rect x="22" y="18" width="4" height="4" rx="0.8"/><rect x="29" y="18" width="4" height="4" rx="0.8"/>
<rect x="8" y="25.5" width="4" height="4" rx="0.8"/><rect x="15" y="25.5" width="4" height="4" rx="0.8"/><rect x="22" y="25.5" width="4" height="4" rx="0.8"/><rect x="29" y="25.5" width="4" height="11" rx="0.8"/>
<rect x="8" y="32.5" width="4" height="4" rx="0.8"/><rect x="15" y="32.5" width="4" height="4" rx="0.8"/><rect x="22" y="32.5" width="4" height="4" rx="0.8"/></g></svg></div>

<svg class="a" style="left:424px;top:291px" width="18" height="19" viewBox="0 0 18 19"><path d="M3.8 2 Q5.2 0.6 6.8 2 V6.2 Q8 5.2 9.3 6.2 Q10.5 5.4 11.8 6.5 Q13.1 5.9 14.3 7 L15.6 8 V16.2 Q15.6 17.8 14 17.8 H3 Q1.4 17.8 1.4 16.2 V10 Q1.4 8.4 3.8 9Z" fill="#000" stroke="#fff" stroke-width="1.1"/><path d="M6.6 13.5 H13" stroke="#666" stroke-width="0.6" stroke-dasharray="1 1"/></svg>
</body></html>
